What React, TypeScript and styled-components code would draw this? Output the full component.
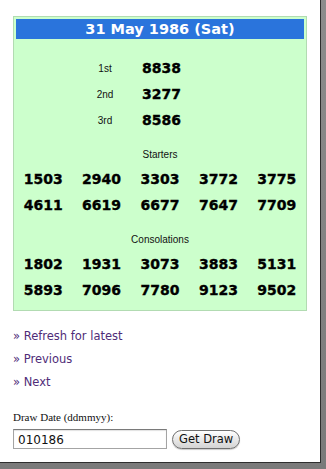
import { Fragment } from "react";
import styled, { createGlobalStyle } from "styled-components";

const Global = createGlobalStyle`
  html, body { margin: 0; padding: 0; background: #fff; }
  body { font-family: "DejaVu Sans", Verdana, sans-serif; }
`;

const Frame = styled.div`
  width: 326px; height: 469px;
  background: linear-gradient(#8c8c8c, #7a7a7a);
  overflow: hidden;
`;

const Page = styled.div`
  width: 321px; height: 463px;
  box-sizing: border-box;
  background: #fff;
  border-right: 1px solid #2e2e2e;
  border-bottom: 1px solid #2e2e2e;
  padding: 16px 0 0 13px;
`;

const Results = styled.div`
  box-sizing: border-box;
  width: 294px; height: 295px;
  padding: 2px;
  background: #ccffcc;
  border: 1px solid #b2dbb2;
`;

const DateBar = styled.div`
  height: 20px; line-height: 21px;
  background: #2a74dc;
  color: #fff;
  text-align: center;
  font: bold 14.5px/21px "DejaVu Sans", Verdana, sans-serif;
`;

const Prizes = styled.div`
  margin-top: 16px;
  padding-left: 54px;
  display: grid;
  grid-template-columns: 70px 1fr;
  column-gap: 2px;
  grid-auto-rows: 26px;
  align-items: center;
`;

const Label = styled.div`
  font: 10px "Liberation Sans", Arial, sans-serif;
  color: #111;
  text-align: center;
`;

const Num = styled.div`
  font: bold 14px "DejaVu Sans", Verdana, sans-serif;
  -webkit-text-stroke: 0.35px #000;
  color: #000;
`;

const SectionTitle = styled.div<{ $gap: number }>`
  margin-top: ${({ $gap }) => $gap}px;
  font: 10px/16px "Liberation Sans", Arial, sans-serif;
  color: #111;
  text-align: center;
`;

const NumGrid = styled.div`
  margin: 3px -2px 0;
  display: grid;
  grid-template-columns: repeat(5, 1fr);
  grid-auto-rows: 26px;
  align-items: center;
  justify-items: center;
`;

const Links = styled.div`
  margin-top: 14px;
`;

const NavLink = styled.a`
  display: block;
  font: 11.5px/23px "DejaVu Sans", "Lucida Grande", sans-serif;
  color: #4f2c78;
  text-decoration: none;
`;

const DateLabel = styled.div`
  margin-top: 16px;
  font: 11px/14px "Liberation Serif", "Times New Roman", serif;
  color: #111;
`;

const Form = styled.div`
  margin-top: 5px;
  display: flex;
  align-items: center;
  gap: 5px;
`;

const DateInput = styled.input`
  box-sizing: border-box;
  width: 154px; height: 20px;
  margin: 0;
  padding: 1px 4px 0;
  border: 1px solid #a4a4a4;
  border-top-color: #7a7a7a;
  box-shadow: inset 0 1px 1px rgba(0,0,0,0.12);
  font: 12px "DejaVu Sans", "Lucida Grande", sans-serif;
  color: #111;
  background: #fff;
  outline: none;
`;

const GetDraw = styled.button`
  box-sizing: border-box;
  height: 19px;
  padding: 0 6px;
  border: 1px solid #707070;
  border-radius: 10px;
  background: linear-gradient(#ffffff, #e6e6e6 55%, #d4d4d4);
  box-shadow: 0 1px 1px rgba(0,0,0,0.2);
  font: 11.5px "DejaVu Sans", "Lucida Grande", sans-serif;
  color: #111;
`;

const prizes = [
  ["1st", "8838"],
  ["2nd", "3277"],
  ["3rd", "8586"],
];
const starters = ["1503", "2940", "3303", "3772", "3775", "4611", "6619", "6677", "7647", "7709"];
const consolations = ["1802", "1931", "3073", "3883", "5131", "5893", "7096", "7780", "9123", "9502"];

export default function App() {
  return (
    <>
      <Global />
      <Frame>
        <Page>
          <Results>
            <DateBar>31 May 1986 (Sat)</DateBar>
            <Prizes>
              {prizes.map(([l, n]) => (
                <Fragment key={l}>
                  <Label>{l}</Label>
                  <Num>{n}</Num>
                </Fragment>
              ))}
            </Prizes>
            <SectionTitle $gap={14}>Starters</SectionTitle>
            <NumGrid>
              {starters.map((n) => <Num key={n}>{n}</Num>)}
            </NumGrid>
            <SectionTitle $gap={14}>Consolations</SectionTitle>
            <NumGrid>
              {consolations.map((n) => <Num key={n}>{n}</Num>)}
            </NumGrid>
          </Results>
          <Links>
            <NavLink href="#">» Refresh for latest</NavLink>
            <NavLink href="#">» Previous</NavLink>
            <NavLink href="#">» Next</NavLink>
          </Links>
          <DateLabel>Draw Date (ddmmyy):</DateLabel>
          <Form>
            <DateInput defaultValue="010186" />
            <GetDraw>Get Draw</GetDraw>
          </Form>
        </Page>
      </Frame>
    </>
  );
}
